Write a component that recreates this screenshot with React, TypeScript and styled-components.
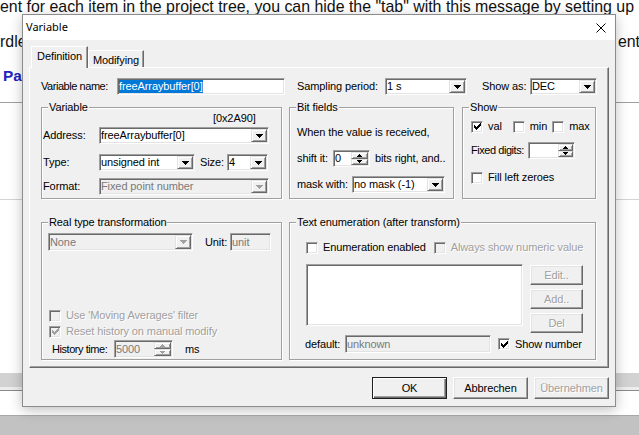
import React from "react";
import styled, { createGlobalStyle, css } from "styled-components";

const UI_FONT = `"Liberation Sans", Arial, sans-serif`;

const GlobalStyle = createGlobalStyle`
  html, body {
    margin: 0;
    padding: 0;
    background: #fff;
  }
  body {
    font-family: ${UI_FONT};
  }
`;

const sunken = css`
  border: 1px solid;
  border-color: #a0a0a0 #ffffff #ffffff #a0a0a0;
  box-shadow: inset 1px 1px 0 #696969, inset -1px -1px 0 #e3e3e3;
`;

const raised = css`
  border: 1px solid;
  border-color: #e3e3e3 #696969 #696969 #e3e3e3;
  box-shadow: inset 1px 1px 0 #ffffff, inset -1px -1px 0 #a0a0a0;
`;

const grayText = css`
  color: #a0a0a0;
  text-shadow: 1px 1px 0 #ffffff;
`;

/* page behind the dialog */

const Page = styled.div`
  position: relative;
  width: 639px;
  height: 435px;
  overflow: hidden;
  background: #fff;
  display: flex;
  flex-direction: column;
`;

const PageLine = styled.div<{ $mt: number; $lh?: number }>`
  flex-shrink: 0;
  display: flex;
  justify-content: space-between;
  margin-top: ${(p) => p.$mt}px;
  height: ${(p) => p.$lh ?? 18}px;
  line-height: ${(p) => p.$lh ?? 18}px;
  font-size: 15.9px;
  color: #111;
  white-space: nowrap;
`;

const PageLink = styled.span`
  margin-left: 3px;
  font-size: 15.4px;
  font-weight: bold;
  color: #2222c2;
`;

const TailText = styled.span`
  margin-right: -1px;
`;

const Strip = styled.div<{ $mt?: number; $h: number; $color: string }>`
  flex-shrink: 0;
  margin-top: ${(p) => p.$mt ?? 0}px;
  height: ${(p) => p.$h}px;
  background: ${(p) => p.$color};
`;

/* dialog frame */

const Dialog = styled.div`
  position: absolute;
  left: 22px;
  top: 14px;
  width: 594px;
  height: 393px;
  box-sizing: border-box;
  display: flex;
  flex-direction: column;
  border: 1px solid #8c8c8c;
  background: #f0f0f0;
  box-shadow: 0 3px 12px rgba(0, 0, 0, 0.25);
  font-family: ${UI_FONT};
  font-size: 11px;
  letter-spacing: -0.1px;
  color: #000;
`;

const TitleBar = styled.div`
  flex-shrink: 0;
  height: 25px;
  display: flex;
  align-items: center;
  justify-content: space-between;
  padding: 0 9px 0 3px;
  background: #fff;
`;

const TitleText = styled.span`
  font-family: "Noto Sans", ${UI_FONT};
  font-size: 11px;
  line-height: 15px;
  letter-spacing: 0;
  padding-bottom: 3px;
`;

const CloseButton = styled.span`
  display: flex;
  width: 10px;
  height: 10px;
`;

const DialogBody = styled.div`
  flex: 1;
  display: flex;
  flex-direction: column;
  padding: 6px 6px 7px;
`;

const TabStrip = styled.div`
  position: relative;
  z-index: 1;
  flex-shrink: 0;
  display: flex;
  align-items: flex-end;
  height: 21px;
  padding-left: 2px;
`;

const Tab = styled.div<{ $w: number; $active?: boolean }>`
  box-sizing: border-box;
  width: ${(p) => p.$w}px;
  height: ${(p) => (p.$active ? 22 : 17)}px;
  margin-bottom: ${(p) => (p.$active ? -1 : 0)}px;
  padding-top: 3px;
  text-align: center;
  line-height: 13px;
  background: #f0f0f0;
  border-style: solid;
  border-width: 1px 1px 0;
  border-color: #fff #696969 #f0f0f0 #fff;
  box-shadow: inset -1px 0 0 #a0a0a0;
`;

const TabPanel = styled.div`
  flex-shrink: 0;
  box-sizing: border-box;
  height: 301px;
  display: flex;
  flex-direction: column;
  padding: 10px 0 0 11px;
  border: 1px solid;
  border-color: #fff #696969 #696969 #fff;
  box-shadow: inset -1px -1px 0 #a0a0a0;
`;

/* layout pieces */

const Row = styled.div<{ $mt?: number; $h?: number }>`
  flex-shrink: 0;
  display: flex;
  align-items: center;
  margin-top: ${(p) => p.$mt ?? 0}px;
  height: ${(p) => p.$h ?? 17}px;
`;

const Label = styled.span<{ $w?: number; $ml?: number; $mt?: number; $tight?: boolean; $disabled?: boolean }>`
  flex-shrink: 0;
  ${(p) => p.$w !== undefined && css`width: ${p.$w}px;`}
  margin-left: ${(p) => p.$ml ?? 0}px;
  margin-top: ${(p) => p.$mt ?? 0}px;
  line-height: 13px;
  white-space: nowrap;
  ${(p) => p.$tight && css`letter-spacing: -0.45px;`}
  ${(p) => p.$disabled && grayText}
`;

const GroupRow = styled.div<{ $mt: number }>`
  flex-shrink: 0;
  display: flex;
  margin-top: ${(p) => p.$mt}px;
`;

const Group = styled.div<{ $w: number; $h: number; $ml?: number }>`
  box-sizing: border-box;
  width: ${(p) => p.$w}px;
  height: ${(p) => p.$h}px;
  margin-left: ${(p) => p.$ml ?? 0}px;
  display: flex;
  flex-direction: column;
  border: 1px solid #a0a0a0;
  box-shadow: inset 1px 1px 0 #fff, 1px 1px 0 #fff;
`;

const Legend = styled.span`
  align-self: flex-start;
  margin: -7px 0 0 6px;
  padding: 0 1px;
  line-height: 13px;
  background: #f0f0f0;
  white-space: nowrap;
`;

const GroupBody = styled.div<{ $pl: number }>`
  flex: 1;
  display: flex;
  flex-direction: column;
  padding-left: ${(p) => p.$pl}px;
`;

const HexAddress = styled.span`
  margin: -2px 0 0 170px;
  line-height: 13px;
`;

/* controls */

const Field = styled.div<{ $w: number; $h?: number; $disabled?: boolean }>`
  box-sizing: border-box;
  flex-shrink: 0;
  width: ${(p) => p.$w}px;
  height: ${(p) => p.$h ?? 17}px;
  display: flex;
  padding: 1px;
  ${sunken}
  background: ${(p) => (p.$disabled ? "#f0f0f0" : "#fff")};
`;

const FieldText = styled.span<{ $disabled?: boolean }>`
  flex: 1;
  min-width: 0;
  display: flex;
  align-items: center;
  overflow: hidden;
  white-space: nowrap;
  line-height: 13px;
  color: ${(p) => (p.$disabled ? "#7a7a7a" : "#000")};
`;

const Selection = styled.span`
  background: #0078d7;
  color: #fff;
`;

const DropButton = styled.span`
  box-sizing: border-box;
  flex-shrink: 0;
  width: 16px;
  display: flex;
  align-items: center;
  justify-content: center;
  background: #f0f0f0;
  ${raised}
`;

const SpinButtons = styled.span<{ $w: number }>`
  flex-shrink: 0;
  width: ${(p) => p.$w}px;
  display: flex;
  flex-direction: column;
`;

const SpinButton = styled.span`
  box-sizing: border-box;
  flex: 1;
  display: flex;
  align-items: center;
  justify-content: center;
  background: #f0f0f0;
  ${raised}
`;

const CheckItem = styled.span<{ $ml?: number; $mr?: number }>`
  flex-shrink: 0;
  display: flex;
  align-items: center;
  gap: 5px;
  margin-left: ${(p) => p.$ml ?? 0}px;
  margin-right: ${(p) => p.$mr ?? 0}px;
`;

const CheckBox = styled.span<{ $disabled?: boolean }>`
  box-sizing: border-box;
  flex-shrink: 0;
  width: 12px;
  height: 12px;
  display: flex;
  align-items: center;
  justify-content: center;
  ${sunken}
  background: ${(p) => (p.$disabled ? "#f0f0f0" : "#fff")};
`;

const ListBox = styled.div<{ $w: number; $h: number; $ml?: number }>`
  box-sizing: border-box;
  flex-shrink: 0;
  width: ${(p) => p.$w}px;
  height: ${(p) => p.$h}px;
  margin-left: ${(p) => p.$ml ?? 0}px;
  ${sunken}
  background: #fff;
`;

const ListRow = styled.div<{ $mt: number }>`
  flex-shrink: 0;
  display: flex;
  align-items: flex-start;
  margin-top: ${(p) => p.$mt}px;
`;

const ButtonColumn = styled.div`
  display: flex;
  flex-direction: column;
  gap: 4px;
  margin-left: 7px;
  padding-top: 1px;
`;

const PushButton = styled.button<{ $w: number; $h: number; $default?: boolean }>`
  box-sizing: border-box;
  flex-shrink: 0;
  width: ${(p) => p.$w}px;
  height: ${(p) => p.$h}px;
  margin: 0;
  padding: 0;
  font: 11px/13px ${UI_FONT};
  letter-spacing: -0.1px;
  color: #000;
  background: #f0f0f0;
  border: 1px solid;
  border-color: #fff #696969 #696969 #fff;
  box-shadow: inset -1px -1px 0 #a0a0a0, inset 1px 1px 0 #e3e3e3;
  ${(p) =>
    p.$default &&
    css`
      border-color: #1e1e1e;
      box-shadow: inset 1px 1px 0 #fff, inset -1px -1px 0 #696969, inset -2px -2px 0 #a0a0a0;
    `}
  &:disabled {
    ${grayText}
  }
`;

const ButtonBar = styled.div`
  flex-shrink: 0;
  display: flex;
  justify-content: flex-end;
  gap: 6px;
  margin-top: 9px;
`;

/* small drawings */

const DropArrow = ({ disabled }: { disabled?: boolean }) => (
  <svg width="7" height="4" viewBox="0 0 7 4" shapeRendering="crispEdges">
    <path d="M0 0h7v1h-1v1h-1v1h-1v1h-1v-1h-1v-1h-1v-1h-1z" fill={disabled ? "#a0a0a0" : "#000"} />
  </svg>
);

const SpinArrow = ({ up, disabled }: { up?: boolean; disabled?: boolean }) => (
  <svg width="5" height="3" viewBox="0 0 5 3" shapeRendering="crispEdges">
    <path
      d={up ? "M2 0h1v1h1v1h1v1h-5v-1h1v-1h1z" : "M0 0h5v1h-1v1h-1v1h-1v-1h-1v-1h-1z"}
      fill={disabled ? "#a0a0a0" : "#000"}
    />
  </svg>
);

const CheckMark = ({ disabled }: { disabled?: boolean }) => (
  <svg width="7" height="7" viewBox="0 0 7 7" shapeRendering="crispEdges">
    <path
      d="M6 0h1v1h-1z M5 1h2v1h-2z M0 2h1v1h-1z M4 2h3v1h-3z M0 3h2v1h-2z M3 3h3v1h-3z M0 4h5v1h-5z M1 5h3v1h-3z M2 6h1v1h-1z"
      fill={disabled ? "#a0a0a0" : "#000"}
    />
  </svg>
);

const CloseIcon = () => (
  <svg width="10" height="10" viewBox="0 0 10 10">
    <path d="M0.5 0.5L9.5 9.5M9.5 0.5L0.5 9.5" stroke="#000" strokeWidth="1" />
  </svg>
);

/* composed controls */

type ComboProps = { w: number; h?: number; value: React.ReactNode; disabled?: boolean };

const Combo = ({ w, h, value, disabled }: ComboProps) => (
  <Field $w={w} $h={h} $disabled={disabled}>
    <FieldText $disabled={disabled}>{value}</FieldText>
    <DropButton>
      <DropArrow disabled={disabled} />
    </DropButton>
  </Field>
);

type SpinProps = { w: number; h?: number; bw: number; value?: string; disabled?: boolean };

const Spin = ({ w, h, bw, value, disabled }: SpinProps) => (
  <Field $w={w} $h={h} $disabled={disabled}>
    <FieldText $disabled={disabled}>{value}</FieldText>
    <SpinButtons $w={bw}>
      <SpinButton>
        <SpinArrow up disabled={disabled} />
      </SpinButton>
      <SpinButton>
        <SpinArrow disabled={disabled} />
      </SpinButton>
    </SpinButtons>
  </Field>
);

type CheckProps = { label: string; checked?: boolean; disabled?: boolean; ml?: number; mr?: number };

const Check = ({ label, checked, disabled, ml, mr }: CheckProps) => (
  <CheckItem $ml={ml} $mr={mr}>
    <CheckBox $disabled={disabled}>{checked && <CheckMark disabled={disabled} />}</CheckBox>
    <Label $disabled={disabled}>{label}</Label>
  </CheckItem>
);

export default function App() {
  return (
    <>
      <GlobalStyle />
      <Page>
        <PageLine $mt={1} $lh={11}>
          <span>ent for each item in the project tree, you can hide the "tab" with this message by setting up</span>
        </PageLine>
        <PageLine $mt={20.5}>
          <span>rdle</span>
          <TailText>ent</TailText>
        </PageLine>
        <PageLine $mt={16.2}>
          <PageLink>Pa</PageLink>
        </PageLine>
        <Strip $mt={17.3} $h={1} $color="#a0a0a0" />
        <Strip $mt={96} $h={1} $color="#d4d4d4" />
        <Strip $mt={173} $h={14} $color="#d2d2d2" />
        <Strip $h={3} $color="#ededed" />
        <Strip $h={1} $color="#8a8a8a" />
        <Strip $mt={24} $h={1} $color="#a8a8a8" />
        <Strip $h={19} $color="#c2c2c2" />

        <Dialog>
          <TitleBar>
            <TitleText>Variable</TitleText>
            <CloseButton>
              <CloseIcon />
            </CloseButton>
          </TitleBar>

          <DialogBody>
            <TabStrip>
              <Tab $w={57} $active>
                Definition
              </Tab>
              <Tab $w={56}>Modifying</Tab>
            </TabStrip>

            <TabPanel>
              <Row>
                <Label $w={76} $tight>
                  Variable name:
                </Label>
                <Field $w={168}>
                  <FieldText>
                    <Selection>freeArraybuffer[0]</Selection>
                  </FieldText>
                </Field>
                <Label $ml={12} $w={88}>
                  Sampling period:
                </Label>
                <Combo w={82} value="1 s" />
                <Label $ml={15} $w={48}>
                  Show as:
                </Label>
                <Combo w={67} value="DEC" />
              </Row>

              <GroupRow $mt={12}>
                <Group $w={241} $h={92}>
                  <Legend>Variable</Legend>
                  <GroupBody $pl={1}>
                    <HexAddress>[0x2A90]</HexAddress>
                    <Row $mt={2}>
                      <Label $w={56}>Address:</Label>
                      <Combo w={170} value="freeArraybuffer[0]" />
                    </Row>
                    <Row $mt={10}>
                      <Label $w={56}>Type:</Label>
                      <Combo w={96} value="unsigned int" />
                      <Label $ml={5} $w={27}>
                        Size:
                      </Label>
                      <Combo w={41} value="4" />
                    </Row>
                    <Row $mt={7}>
                      <Label $w={56}>Format:</Label>
                      <Combo w={170} value="Fixed point number" disabled />
                    </Row>
                  </GroupBody>
                </Group>

                <Group $w={165} $h={92} $ml={7}>
                  <Legend>Bit fields</Legend>
                  <GroupBody $pl={7}>
                    <Label $mt={12}>When the value is received,</Label>
                    <Row $mt={11}>
                      <Label $w={36}>shift it:</Label>
                      <Spin w={37} bw={17} value="0" />
                      <Label $ml={5}>bits right, and..</Label>
                    </Row>
                    <Row $mt={9}>
                      <Label $w={55}>mask with:</Label>
                      <Combo w={93} value="no mask (-1)" />
                    </Row>
                  </GroupBody>
                </Group>

                <Group $w={134} $h={92} $ml={8}>
                  <Legend>Show</Legend>
                  <GroupBody $pl={8}>
                    <Row $mt={6} $h={13}>
                      <Check label="val" checked mr={11} />
                      <Check label="min" mr={5} />
                      <Check label="max" />
                    </Row>
                    <Row $mt={9}>
                      <Label $w={57} $tight>
                        Fixed digits:
                      </Label>
                      <Spin w={47} bw={15} />
                    </Row>
                    <Row $mt={12} $h={13}>
                      <Check label="Fill left zeroes" />
                    </Row>
                  </GroupBody>
                </Group>
              </GroupRow>

              <GroupRow $mt={23}>
                <Group $w={241} $h={138}>
                  <Legend>Real type transformation</Legend>
                  <GroupBody $pl={6}>
                    <Row $mt={4} $h={18}>
                      <Combo w={145} h={18} value="None" disabled />
                      <Label $ml={12} $w={25}>
                        Unit:
                      </Label>
                      <Field $w={41} $h={18} $disabled>
                        <FieldText $disabled>unit</FieldText>
                      </Field>
                    </Row>
                    <Row $mt={58} $h={13}>
                      <Check label="Use 'Moving Averages' filter" disabled ml={1} />
                    </Row>
                    <Row $mt={3} $h={13}>
                      <Check label="Reset history on manual modify" checked disabled ml={1} />
                    </Row>
                    <Row $mt={2} $h={18}>
                      <Label $ml={4} $w={62} $tight>
                        History time:
                      </Label>
                      <Spin w={59} h={18} bw={17} value="5000" disabled />
                      <Label $ml={12}>ms</Label>
                    </Row>
                  </GroupBody>
                </Group>

                <Group $w={307} $h={138} $ml={7}>
                  <Legend>Text enumeration (after transform)</Legend>
                  <GroupBody $pl={15}>
                    <Row $mt={12} $h={13}>
                      <Check label="Enumeration enabled" ml={1} mr={8} />
                      <Check label="Always show numeric value" disabled />
                    </Row>
                    <ListRow $mt={10}>
                      <ListBox $w={217} $h={62} $ml={1} />
                      <ButtonColumn>
                        <PushButton $w={53} $h={20} disabled>
                          Edit..
                        </PushButton>
                        <PushButton $w={53} $h={20} disabled>
                          Add..
                        </PushButton>
                        <PushButton $w={53} $h={20} disabled>
                          Del
                        </PushButton>
                      </ButtonColumn>
                    </ListRow>
                    <Row $mt={2} $h={18}>
                      <Label $w={40}>default:</Label>
                      <Field $w={146} $h={18} $disabled>
                        <FieldText $disabled>unknown</FieldText>
                      </Field>
                      <Check label="Show number" checked ml={7} />
                    </Row>
                  </GroupBody>
                </Group>
              </GroupRow>
            </TabPanel>

            <ButtonBar>
              <PushButton $w={75} $h={22} $default>
                OK
              </PushButton>
              <PushButton $w={75} $h={22}>
                Abbrechen
              </PushButton>
              <PushButton $w={75} $h={22} disabled>
                Übernehmen
              </PushButton>
            </ButtonBar>
          </DialogBody>
        </Dialog>
      </Page>
    </>
  );
}
